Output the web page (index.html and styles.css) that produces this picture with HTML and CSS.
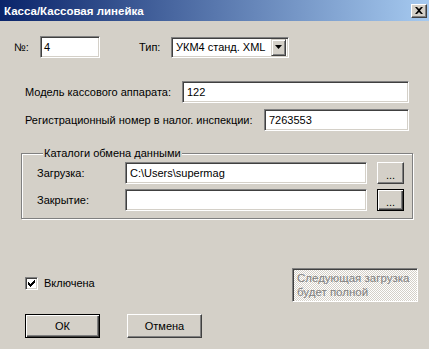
FILE: index.html
```html
<!DOCTYPE html>
<html>
  <head>
    <title>Касса/Кассовая линейка</title>
    <meta charset="utf-8" />
    <link rel="stylesheet" href="styles.css">
  </head>
  <body>
    <div class="window">
      <div class="titlebar">
        <span class="title">Касса/Кассовая линейка</span>
        <div class="close">
          <svg width="8" height="7" viewBox="0 0 8 7"><path d="M0 0h2l2 2 2-2h2L5 3.5 8 7H6L4 5 2 7H0l3-3.5z" fill="#000"/></svg>
        </div>
      </div>

      <div class="row row-top">
        <span class="lbl lbl-no">№:</span>
        <div class="edit edit-no">4</div>
        <span class="lbl lbl-type">Тип:</span>
        <div class="combo">
          <span class="combo-text">УКМ4 станд. XML</span>
          <div class="drop">
            <svg width="7" height="4" viewBox="0 0 7 4"><path d="M0 0h7L3.5 4z" fill="#000"/></svg>
          </div>
        </div>
      </div>

      <div class="row row-model">
        <span class="lbl grow">Модель кассового аппарата:</span>
        <div class="edit edit-model">122</div>
      </div>

      <div class="row row-reg">
        <span class="lbl grow">Регистрационный номер в налог. инспекции:</span>
        <div class="edit edit-reg">7263553</div>
      </div>

      <fieldset class="group">
        <legend>Каталоги обмена данными</legend>
        <div class="grow-row">
          <span class="lbl grow">Загрузка:</span>
          <div class="edit edit-path">C:\Users\supermag</div>
          <div class="btn btn-dots">...</div>
        </div>
        <div class="grow-row grow-row-2">
          <span class="lbl grow">Закрытие:</span>
          <div class="edit edit-path"></div>
          <div class="btn btn-dots btn-default">...</div>
        </div>
      </fieldset>

      <div class="row row-check">
        <div class="check">
          <svg width="7" height="7" viewBox="0 0 7 7"><path d="M0 2h1v1h1v1h1V3h1V2h1V1h1V0h1v3H6v1H5v1H4v1H3v1H2V6H1V5H0z" fill="#000"/></svg>
        </div>
        <span class="lbl check-lbl">Включена</span>
        <div class="note">Следующая загрузка<br>будет полной</div>
      </div>

      <div class="row row-buttons">
        <div class="btn btn-main btn-default">ОК</div>
        <div class="btn btn-main">Отмена</div>
      </div>
    </div>
  </body>
</html>
```

FILE: styles.css
```css
body {
  margin: 0;
  background: #d4d0c8;
  font-family: "Liberation Sans", Arial, sans-serif;
  font-size: 11px;
  color: #000;
}
.window {
  width: 429px;
  height: 349px;
  background: #d4d0c8;
  overflow: hidden;
}
.titlebar {
  height: 21px;
  display: flex;
  align-items: center;
  background: linear-gradient(to right, #0a246a, #a6caf0);
  padding: 0 2px 0 4px;
}
.title {
  flex: 1;
  color: #fff;
  font-weight: bold;
  font-size: 11.5px;
}
.close {
  width: 16px;
  height: 14px;
  box-sizing: border-box;
  background: #d4d0c8;
  border-top: 1px solid #fff;
  border-left: 1px solid #fff;
  border-right: 1px solid #404040;
  border-bottom: 1px solid #404040;
  box-shadow: inset -1px -1px 0 #808080;
  display: flex;
  align-items: center;
  justify-content: center;
}
.row {
  display: flex;
  align-items: center;
}
.lbl {
  white-space: nowrap;
}
.grow {
  flex: 1;
}
.edit {
  box-sizing: border-box;
  height: 22px;
  background: #fff;
  border-top: 1px solid #808080;
  border-left: 1px solid #808080;
  border-right: 1px solid #fff;
  border-bottom: 1px solid #fff;
  box-shadow: inset 1px 1px 0 #404040, inset -1px -1px 0 #d4d0c8;
  padding: 0 4px;
  line-height: 20px;
  white-space: nowrap;
}
.row-top {
  margin-top: 15px;
  padding-left: 14px;
}
.lbl-no {
  width: 26px;
}
.edit-no {
  width: 60px;
  padding-left: 3px;
}
.lbl-type {
  margin-left: 39px;
  width: 32px;
}
.combo {
  box-sizing: border-box;
  width: 118px;
  height: 21px;
  display: flex;
  align-items: center;
  background: #fff;
  border-top: 1px solid #808080;
  border-left: 1px solid #808080;
  border-right: 1px solid #fff;
  border-bottom: 1px solid #fff;
  box-shadow: inset 1px 1px 0 #404040, inset -1px -1px 0 #d4d0c8;
  padding: 2px 2px 2px 4px;
}
.combo-text {
  flex: 1;
  white-space: nowrap;
  font-size: 11px;
}
.drop {
  box-sizing: border-box;
  width: 15px;
  height: 17px;
  background: #d4d0c8;
  border-top: 1px solid #d4d0c8;
  border-left: 1px solid #d4d0c8;
  border-right: 1px solid #404040;
  border-bottom: 1px solid #404040;
  box-shadow: inset 1px 1px 0 #fff, inset -1px -1px 0 #808080;
  display: flex;
  align-items: center;
  justify-content: center;
}
.row-model {
  margin-top: 23px;
  padding: 0 20px 0 25px;
}
.edit-model {
  width: 227px;
}
.row-reg {
  margin-top: 6px;
  padding: 0 20px 0 25px;
}
.edit-reg {
  width: 145px;
}
.group {
  margin: 16px 16px 0 21px;
  padding: 2px 8px 7px 15px;
  border: 1px solid #808080;
  box-shadow: 1px 1px 0 #fff, inset 1px 1px 0 #fff;
  min-width: 0;
}
.group legend {
  margin-left: 6px;
  padding: 0 1px;
  line-height: 13px;
  background: #d4d0c8;
}
.grow-row {
  display: flex;
  align-items: center;
}
.grow-row-2 {
  margin-top: 5px;
}
.edit-path {
  width: 242px;
}
.btn {
  box-sizing: border-box;
  background: #d4d0c8;
  border-top: 1px solid #fff;
  border-left: 1px solid #fff;
  border-right: 1px solid #404040;
  border-bottom: 1px solid #404040;
  box-shadow: inset -1px -1px 0 #808080;
  display: flex;
  align-items: center;
  justify-content: center;
}
.btn-default {
  border: 1px solid #000;
  box-shadow: inset 1px 1px 0 #fff, inset -1px -1px 0 #404040, inset -2px -2px 0 #808080;
}
.btn-dots {
  width: 27px;
  height: 22px;
  margin-left: 10px;
  padding-top: 3px;
}
.row-check {
  margin-top: 49px;
  padding: 0 11px 0 25px;
  align-items: flex-start;
}
.check {
  box-sizing: border-box;
  width: 13px;
  height: 13px;
  margin-top: 9px;
  background: #fff;
  border-top: 1px solid #808080;
  border-left: 1px solid #808080;
  border-right: 1px solid #fff;
  border-bottom: 1px solid #fff;
  box-shadow: inset 1px 1px 0 #404040, inset -1px -1px 0 #d4d0c8;
  display: flex;
  align-items: center;
  justify-content: center;
}
.check-lbl {
  margin: 9px 0 0 6px;
}
.note {
  margin-left: auto;
  box-sizing: border-box;
  width: 126px;
  height: 34px;
  padding: 2px 4px;
  border-top: 1px solid #808080;
  border-left: 1px solid #808080;
  border-right: 1px solid #fff;
  border-bottom: 1px solid #fff;
  box-shadow: inset 1px 1px 0 #404040;
  background: repeating-conic-gradient(#fff 0 25%, #d4d0c8 0 50%) 0 0 / 2px 2px;
  color: #808080;
  font-size: 11.5px;
  line-height: 14px;
  white-space: nowrap;
}
.row-buttons {
  margin-top: 12px;
  padding-left: 25px;
  gap: 27px;
}
.btn-main {
  width: 75px;
  height: 24px;
}
```
